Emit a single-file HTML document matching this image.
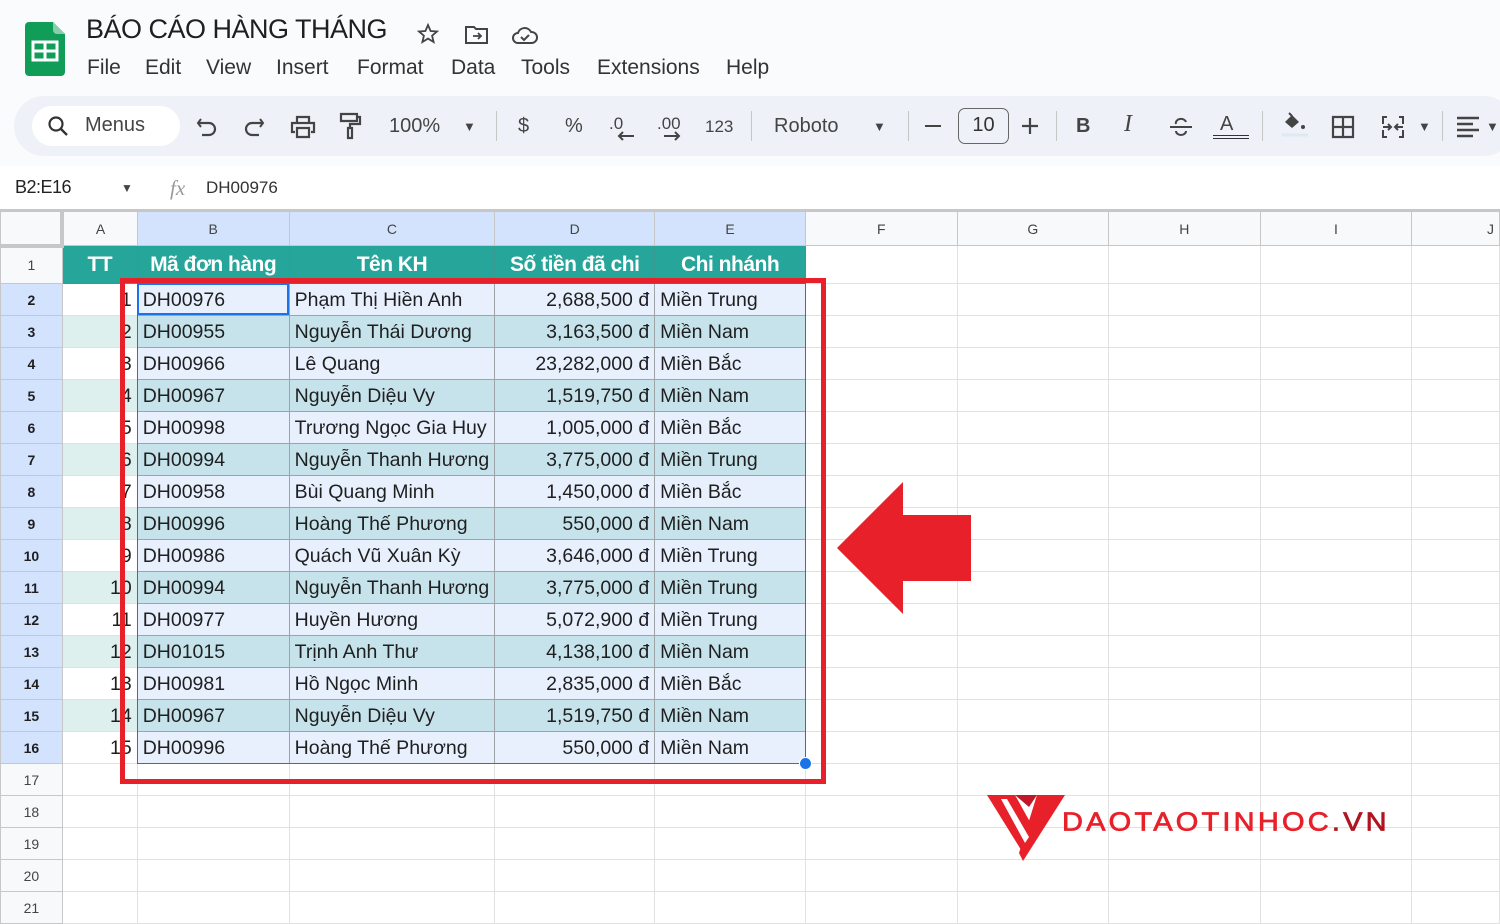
<!DOCTYPE html>
<html><head><meta charset="utf-8"><style>
*{box-sizing:border-box;margin:0;padding:0}
body{width:1500px;height:900px;overflow:hidden;background:#fff;font-family:"Liberation Sans",Arial,sans-serif;color:#1f1f1f;position:relative}
.abs{position:absolute}
.top{left:0;top:0;width:1500px;height:166px;background:#f9fbfd}
.title{left:86px;top:14px;font-size:27px;color:#1f1f1f;letter-spacing:-0.5px}
.menu{top:56px;font-size:21px;color:#333}
.tb{left:14px;top:96px;width:1500px;height:60px;background:#eef2f8;border-radius:30px}
.search{left:32px;top:106px;width:148px;height:40px;background:#fff;border-radius:20px}
.t{font-size:20px;color:#444;top:114px}
.sep{width:1px;height:30px;background:#c4c7c5;top:111px}
table{position:absolute;left:0;top:211px;border-collapse:collapse;table-layout:fixed}
td{height:32px;border:1px solid #e1e1e1;font-size:19.5px;white-space:nowrap;overflow:hidden;padding:0 5px;line-height:30px}
tr.ch td{height:34px;background:#f8f9fa;font-size:14px;text-align:center;color:#444;border-color:#c7c7c7}
tr.ch td.sel{background:#d3e3fd}
td.rh{background:#f8f9fa;text-align:center;font-size:14px;color:#444;padding:0;border-color:#c7c7c7}
td.rhs{background:#d3e3fd;font-weight:bold;color:#1f1f1f}
tr.h1 td{height:38px}
td.hd{background:#26a69a;color:#fff;font-weight:bold;text-align:center;font-size:21px;border-color:#3a9a90;letter-spacing:-0.5px}
td.d{border-color:#9ea3a8}
tr.e td.d{background:#e8f0fe}
tr.o td.d{background:#c6e3ec}
tr.o td.a{background:#def0ee}
td.r{text-align:right}
</style></head><body>
<div class="abs top"></div>
<svg class="abs" style="left:25px;top:22px" width="40" height="54" viewBox="0 0 40 54"><path d="M4 0h24l12 12v38a4 4 0 0 1-4 4H4a4 4 0 0 1-4-4V4a4 4 0 0 1 4-4z" fill="#0f9d58"/><path d="M28 0l12 12H32a4 4 0 0 1-4-4z" fill="#87ceac"/><rect x="8" y="20" width="24" height="18" fill="none" stroke="#fff" stroke-width="3"/><path d="M8 29h24M20 20v18" stroke="#fff" stroke-width="3"/></svg>
<div class="abs title">BÁO CÁO HÀNG THÁNG</div>
<svg class="abs" style="left:416px;top:22px" width="24" height="24" viewBox="0 0 24 24"><path d="M12 3l2.6 6 6.4.5-4.9 4.2 1.5 6.3L12 16.6 6.4 20l1.5-6.3L3 9.5 9.4 9z" fill="none" stroke="#444" stroke-width="1.8"/></svg>
<svg class="abs" style="left:464px;top:24px" width="26" height="22" viewBox="0 0 26 22"><path d="M2 3h8l2 2h11v14H2z" fill="none" stroke="#444" stroke-width="2"/><path d="M9 12h8M14 9l3 3-3 3" fill="none" stroke="#444" stroke-width="1.8"/></svg>
<svg class="abs" style="left:511px;top:24px" width="28" height="22" viewBox="0 0 28 22"><path d="M7 19a5 5 0 0 1 0-10 7 7 0 0 1 13-1 5.5 5.5 0 0 1 1 11z" fill="none" stroke="#444" stroke-width="2"/><path d="M10 13l3 3 5-5" fill="none" stroke="#444" stroke-width="2"/></svg>
<div class="abs menu" style="left:87px">File</div>
<div class="abs menu" style="left:145px">Edit</div>
<div class="abs menu" style="left:206px">View</div>
<div class="abs menu" style="left:276px">Insert</div>
<div class="abs menu" style="left:357px">Format</div>
<div class="abs menu" style="left:451px">Data</div>
<div class="abs menu" style="left:521px">Tools</div>
<div class="abs menu" style="left:597px">Extensions</div>
<div class="abs menu" style="left:726px">Help</div>

<div class="abs tb"></div>
<div class="abs search"></div>
<svg class="abs" style="left:46px;top:114px" width="24" height="24" viewBox="0 0 24 24"><circle cx="10" cy="10" r="6.5" fill="none" stroke="#333" stroke-width="2.2"/><path d="M15 15l6 6" stroke="#333" stroke-width="2.4"/></svg>
<div class="abs t" style="left:85px">Menus</div>
<svg class="abs" style="left:196px;top:116px" width="22" height="22" viewBox="0 0 22 22"><path d="M5 3L2 7l3 4" fill="none" stroke="#444" stroke-width="2"/><path d="M2 7h11a6 6 0 0 1 0 12H6" fill="none" stroke="#444" stroke-width="2.2"/></svg>
<svg class="abs" style="left:243px;top:116px" width="22" height="22" viewBox="0 0 22 22"><path d="M17 3l3 4-3 4" fill="none" stroke="#444" stroke-width="2"/><path d="M20 7H9a6 6 0 0 0 0 12h7" fill="none" stroke="#444" stroke-width="2.2"/></svg>
<svg class="abs" style="left:290px;top:114px" width="26" height="26" viewBox="0 0 26 26"><path d="M7 9V3h12v6M5 18H2V9h22v9h-3M7 14h12v9H7z" fill="none" stroke="#444" stroke-width="2.2"/></svg>
<svg class="abs" style="left:338px;top:112px" width="24" height="28" viewBox="0 0 24 28"><path d="M3 2h16v7H3zM19 5h3v7h-10v4M10 16h4v10h-4z" fill="none" stroke="#444" stroke-width="2.2"/></svg>
<div class="abs t" style="left:389px;top:115px">100%</div>
<div class="abs t" style="left:463px;font-size:13px;top:119px">▼</div>
<div class="abs sep" style="left:496px"></div>
<div class="abs t" style="left:518px;top:115px">$</div>
<div class="abs t" style="left:565px;top:115px">%</div>
<div class="abs t" style="left:609px;font-size:17px;top:114px">.0</div>
<div class="abs t" style="left:657px;font-size:17px;top:114px">.00</div>
<svg class="abs" style="left:616px;top:130px" width="20" height="12" viewBox="0 0 20 12"><path d="M18 6H3M7 2L3 6l4 4" fill="none" stroke="#444" stroke-width="2"/></svg>
<svg class="abs" style="left:662px;top:130px" width="20" height="12" viewBox="0 0 20 12"><path d="M2 6h15M13 2l4 4-4 4" fill="none" stroke="#444" stroke-width="2"/></svg>
<div class="abs t" style="left:705px;font-size:17px;top:117px">123</div>
<div class="abs sep" style="left:751px"></div>
<div class="abs t" style="left:774px;top:115px">Roboto</div>
<div class="abs t" style="left:873px;font-size:13px;top:119px">▼</div>
<div class="abs sep" style="left:908px"></div>
<div class="abs" style="left:925px;top:125px;width:16px;height:2px;background:#444"></div>
<div class="abs" style="left:958px;top:108px;width:51px;height:36px;border:1.5px solid #666;border-radius:7px;font-size:20px;text-align:center;line-height:33px;color:#333">10</div>
<svg class="abs" style="left:1021px;top:117px" width="18" height="18" viewBox="0 0 18 18"><path d="M9 1v16M1 9h16" stroke="#444" stroke-width="2.2"/></svg>
<div class="abs sep" style="left:1056px"></div>
<div class="abs t" style="left:1076px;font-weight:bold;top:115px">B</div>
<div class="abs t" style="left:1124px;font-style:italic;font-family:'Liberation Serif',serif;font-size:24px;top:111px">I</div>
<svg class="abs" style="left:1169px;top:116px" width="24" height="22" viewBox="0 0 24 22"><path d="M1 11h22" stroke="#444" stroke-width="2"/><path d="M7 8a5 4 0 0 1 10-2M7 15a5 4 0 0 0 10 0" fill="none" stroke="#444" stroke-width="2"/></svg>
<div class="abs t" style="left:1220px;top:113px">A</div>
<div class="abs" style="left:1213px;top:135px;width:36px;height:4px;border-top:1.5px solid #333;border-bottom:1.5px solid #333"></div>
<div class="abs sep" style="left:1262px"></div>
<svg class="abs" style="left:1280px;top:110px" width="28" height="28" viewBox="0 0 28 28"><path d="M5 12l7-7 7 7-7 6z" fill="#444"/><path d="M9 3l3 3" stroke="#444" stroke-width="2"/><circle cx="23" cy="17" r="2" fill="#444"/><path d="M2 25h26" stroke="#e0e8f0" stroke-width="3"/></svg>
<svg class="abs" style="left:1331px;top:115px" width="24" height="24" viewBox="0 0 24 24"><path d="M2 2h20v20H2zM12 2v20M2 12h20" fill="none" stroke="#444" stroke-width="2.2"/></svg>
<svg class="abs" style="left:1380px;top:114px" width="26" height="26" viewBox="0 0 26 26"><path d="M7 3H3v7M3 16v7h4M19 3h4v7M23 16v7h-4M3 13h7M23 13h-7M8 10l3 3-3 3M18 10l-3 3 3 3" fill="none" stroke="#444" stroke-width="2"/></svg>
<div class="abs t" style="left:1418px;font-size:13px;top:119px">▼</div>
<div class="abs sep" style="left:1442px"></div>
<svg class="abs" style="left:1456px;top:116px" width="24" height="22" viewBox="0 0 24 22"><path d="M1 2h22M1 8h16M1 14h22M1 20h16" stroke="#444" stroke-width="2.4"/></svg>
<div class="abs t" style="left:1486px;font-size:13px;top:119px">▼</div>

<div class="abs" style="left:15px;top:177px;font-size:18px;color:#222;letter-spacing:-0.5px">B2:E16</div>
<div class="abs" style="left:121px;top:181px;font-size:12px;color:#444">▼</div>
<div class="abs" style="left:170px;top:176px;font-size:21px;color:#999;font-style:italic;font-family:'Liberation Serif',serif">fx</div>
<div class="abs" style="left:206px;top:178px;font-size:17px;color:#333">DH00976</div>
<div class="abs" style="left:0;top:209px;width:1500px;height:2px;background:#c7c7c7"></div>

<table>
<colgroup><col style="width:62px"><col style="width:75px"><col style="width:152px"><col style="width:204px"><col style="width:160px"><col style="width:151px"><col style="width:152px"><col style="width:152px"><col style="width:152px"><col style="width:152px"><col style="width:88px"></colgroup>
<tr class="ch"><td style="border-right:4px solid #c7c7c7;border-bottom:4px solid #c7c7c7"></td><td>A</td><td class="sel">B</td><td class="sel">C</td><td class="sel">D</td><td class="sel">E</td><td>F</td><td>G</td><td>H</td><td>I</td><td style="text-align:right">J</td></tr>
<tr class="h1"><td class="rh">1</td><td class="hd">TT</td><td class="hd">Mã đơn hàng</td><td class="hd">Tên KH</td><td class="hd">Số tiền đã chi</td><td class="hd">Chi nhánh</td><td></td><td></td><td></td><td></td><td></td></tr>
<tr class="e"><td class="rh rhs">2</td><td class="a r">1</td><td class="d">DH00976</td><td class="d">Phạm Thị Hiền Anh</td><td class="d r">2,688,500 đ</td><td class="d">Miền Trung</td><td></td><td></td><td></td><td></td><td></td></tr>
<tr class="o"><td class="rh rhs">3</td><td class="a r">2</td><td class="d">DH00955</td><td class="d">Nguyễn Thái Dương</td><td class="d r">3,163,500 đ</td><td class="d">Miền Nam</td><td></td><td></td><td></td><td></td><td></td></tr>
<tr class="e"><td class="rh rhs">4</td><td class="a r">3</td><td class="d">DH00966</td><td class="d">Lê Quang</td><td class="d r">23,282,000 đ</td><td class="d">Miền Bắc</td><td></td><td></td><td></td><td></td><td></td></tr>
<tr class="o"><td class="rh rhs">5</td><td class="a r">4</td><td class="d">DH00967</td><td class="d">Nguyễn Diệu Vy</td><td class="d r">1,519,750 đ</td><td class="d">Miền Nam</td><td></td><td></td><td></td><td></td><td></td></tr>
<tr class="e"><td class="rh rhs">6</td><td class="a r">5</td><td class="d">DH00998</td><td class="d">Trương Ngọc Gia Huy</td><td class="d r">1,005,000 đ</td><td class="d">Miền Bắc</td><td></td><td></td><td></td><td></td><td></td></tr>
<tr class="o"><td class="rh rhs">7</td><td class="a r">6</td><td class="d">DH00994</td><td class="d">Nguyễn Thanh Hương</td><td class="d r">3,775,000 đ</td><td class="d">Miền Trung</td><td></td><td></td><td></td><td></td><td></td></tr>
<tr class="e"><td class="rh rhs">8</td><td class="a r">7</td><td class="d">DH00958</td><td class="d">Bùi Quang Minh</td><td class="d r">1,450,000 đ</td><td class="d">Miền Bắc</td><td></td><td></td><td></td><td></td><td></td></tr>
<tr class="o"><td class="rh rhs">9</td><td class="a r">8</td><td class="d">DH00996</td><td class="d">Hoàng Thế Phương</td><td class="d r">550,000 đ</td><td class="d">Miền Nam</td><td></td><td></td><td></td><td></td><td></td></tr>
<tr class="e"><td class="rh rhs">10</td><td class="a r">9</td><td class="d">DH00986</td><td class="d">Quách Vũ Xuân Kỳ</td><td class="d r">3,646,000 đ</td><td class="d">Miền Trung</td><td></td><td></td><td></td><td></td><td></td></tr>
<tr class="o"><td class="rh rhs">11</td><td class="a r">10</td><td class="d">DH00994</td><td class="d">Nguyễn Thanh Hương</td><td class="d r">3,775,000 đ</td><td class="d">Miền Trung</td><td></td><td></td><td></td><td></td><td></td></tr>
<tr class="e"><td class="rh rhs">12</td><td class="a r">11</td><td class="d">DH00977</td><td class="d">Huyền Hương</td><td class="d r">5,072,900 đ</td><td class="d">Miền Trung</td><td></td><td></td><td></td><td></td><td></td></tr>
<tr class="o"><td class="rh rhs">13</td><td class="a r">12</td><td class="d">DH01015</td><td class="d">Trịnh Anh Thư</td><td class="d r">4,138,100 đ</td><td class="d">Miền Nam</td><td></td><td></td><td></td><td></td><td></td></tr>
<tr class="e"><td class="rh rhs">14</td><td class="a r">13</td><td class="d">DH00981</td><td class="d">Hồ Ngọc Minh</td><td class="d r">2,835,000 đ</td><td class="d">Miền Bắc</td><td></td><td></td><td></td><td></td><td></td></tr>
<tr class="o"><td class="rh rhs">15</td><td class="a r">14</td><td class="d">DH00967</td><td class="d">Nguyễn Diệu Vy</td><td class="d r">1,519,750 đ</td><td class="d">Miền Nam</td><td></td><td></td><td></td><td></td><td></td></tr>
<tr class="e"><td class="rh rhs">16</td><td class="a r">15</td><td class="d">DH00996</td><td class="d">Hoàng Thế Phương</td><td class="d r">550,000 đ</td><td class="d">Miền Nam</td><td></td><td></td><td></td><td></td><td></td></tr>
<tr><td class="rh">17</td><td></td><td></td><td></td><td></td><td></td><td></td><td></td><td></td><td></td><td></td></tr>
<tr><td class="rh">18</td><td></td><td></td><td></td><td></td><td></td><td></td><td></td><td></td><td></td><td></td></tr>
<tr><td class="rh">19</td><td></td><td></td><td></td><td></td><td></td><td></td><td></td><td></td><td></td><td></td></tr>
<tr><td class="rh">20</td><td></td><td></td><td></td><td></td><td></td><td></td><td></td><td></td><td></td><td></td></tr>
<tr><td class="rh">21</td><td></td><td></td><td></td><td></td><td></td><td></td><td></td><td></td><td></td><td></td></tr>
</table>

<div class="abs" style="left:137px;top:283px;width:669px;height:481px;border:1.5px solid #1a73e8"></div>
<div class="abs" style="left:137px;top:283px;width:152px;height:32px;border:2px solid #1a73e8"></div>
<div class="abs" style="left:799px;top:757px;width:13px;height:13px;border-radius:50%;background:#1a73e8;border:1px solid #fff"></div>
<div class="abs" style="left:120px;top:278px;width:706px;height:506px;border:5px solid #e8202a"></div>
<svg class="abs" style="left:0;top:0" width="1500" height="900"><polygon points="837,548 903,482 903,515 971,515 971,581 903,581 903,614" fill="#e8202a"/></svg>
<svg class="abs" style="left:985px;top:793px" width="80" height="70" viewBox="0 0 80 70"><polygon points="2,2 30,2 50,38 38,60" fill="#e8202a"/><polygon points="30,2 52,2 44,14" fill="#c0182a"/><polygon points="52,2 80,2 38,68 34,60" fill="#e8202a"/><polygon points="16,6 22,6 44,44 40,50" fill="#fff"/></svg>
<div class="abs" style="left:1062px;top:808px;font-size:29px;color:#e8202a;letter-spacing:3.2px;transform:scaleY(0.9);transform-origin:left top;-webkit-text-stroke:0.8px #e8202a">DAOTAOTINHOC<span style="color:#b0141e;-webkit-text-stroke-color:#b0141e">.VN</span></div>
</body></html>
